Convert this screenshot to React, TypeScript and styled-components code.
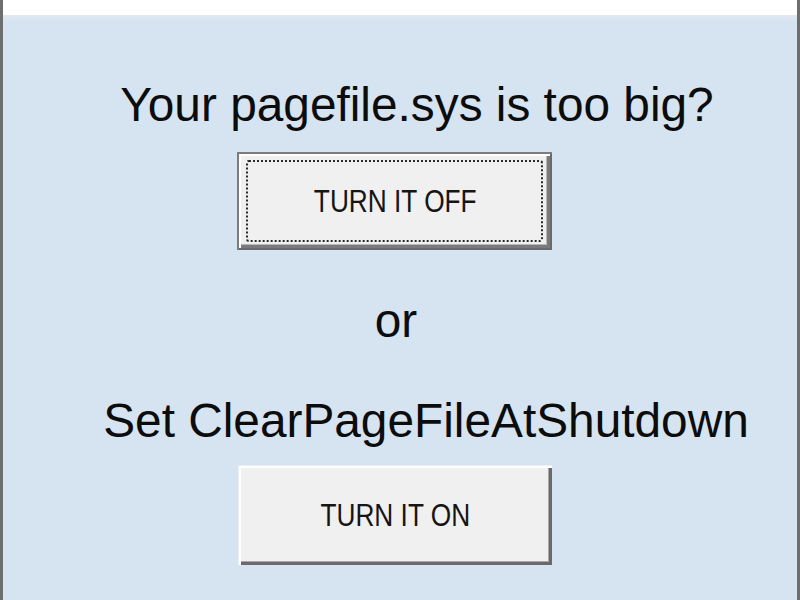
import React from "react";
import styled, { createGlobalStyle } from "styled-components";

const Global = createGlobalStyle`
  html, body {
    margin: 0;
    padding: 0;
    background: #d6e3f0;
  }
  #root {
    width: 800px;
    height: 600px;
  }
`;

const Window = styled.div`
  width: 800px;
  height: 600px;
  box-sizing: border-box;
  display: flex;
  flex-direction: column;
  border-left: 3px solid #6e6e6e;
  border-right: 3px solid #6e6e6e;
  overflow: hidden;
  font-family: "Liberation Sans", Arial, sans-serif;
  color: #0c0c0c;
`;

const TopStrip = styled.div`
  height: 15px;
  flex: none;
  background: #ffffff;
  border-bottom: 1px solid #e4e8ec;
`;

const Panel = styled.div`
  flex: 1;
  display: flex;
  flex-direction: column;
  align-items: center;
  padding-top: 62px;
  background: linear-gradient(#dfe8f2 0px, #d6e3f0 6px);
`;

const Label = styled.div<{ $offset: number; $gap: number }>`
  font-size: 47.8px;
  line-height: 54px;
  height: 54px;
  white-space: nowrap;
  margin-top: ${(p) => p.$gap}px;
  margin-left: ${(p) => p.$offset * 2}px;
`;

const ClassicButton = styled.button<{ $default?: boolean; $gap: number }>`
  position: relative;
  display: flex;
  align-items: center;
  justify-content: center;
  width: ${(p) => (p.$default ? 315 : 314)}px;
  height: ${(p) => (p.$default ? 98 : 100)}px;
  margin-top: ${(p) => p.$gap}px;
  margin-left: -11px;
  padding: 0;
  border: none;
  background: #f0f0f0;
  cursor: default;
  box-shadow: ${(p) =>
    p.$default
      ? `inset 2px 2px 0 #7c7c7c, inset -2px -2px 0 #6a6a6a,
         inset 4px 4px 0 #ffffff, inset -5px -5px 0 #7a7a7a,
         inset -6px -6px 0 #b8b8b8`
      : `inset 1px 1px 0 #e8eef5, inset 3px 3px 0 #ffffff,
         inset -3px -3px 0 #6a6a6a, inset -4px -4px 0 #a8a8a8`};

  &::after {
    content: "";
    display: ${(p) => (p.$default ? "block" : "none")};
    position: absolute;
    inset: 8px 9px 8px 9px;
    border: 2px dotted #2a2a2a;
    border-radius: 3px;
    pointer-events: none;
  }
`;

/* Narrow caption face, squeezed like the classic dialog font */
const Caption = styled.span`
  display: inline-block;
  font-family: "Liberation Sans", Arial, sans-serif;
  font-size: 32px;
  line-height: 32px;
  color: #151515;
  white-space: nowrap;
  transform: scaleX(0.82);
  margin-left: 2px;
`;

export default function App() {
  return (
    <>
      <Global />
      <Window>
        <TopStrip />
        <Panel>
          <Label $offset={17} $gap={0}>
            Your pagefile.sys is too big?
          </Label>
          <ClassicButton $default $gap={20}>
            <Caption>TURN IT OFF</Caption>
          </ClassicButton>
          <Label $offset={-4} $gap={44}>
            or
          </Label>
          <Label $offset={26} $gap={46}>
            Set ClearPageFileAtShutdown
          </Label>
          <ClassicButton $gap={17}>
            <Caption>TURN IT ON</Caption>
          </ClassicButton>
        </Panel>
      </Window>
    </>
  );
}
